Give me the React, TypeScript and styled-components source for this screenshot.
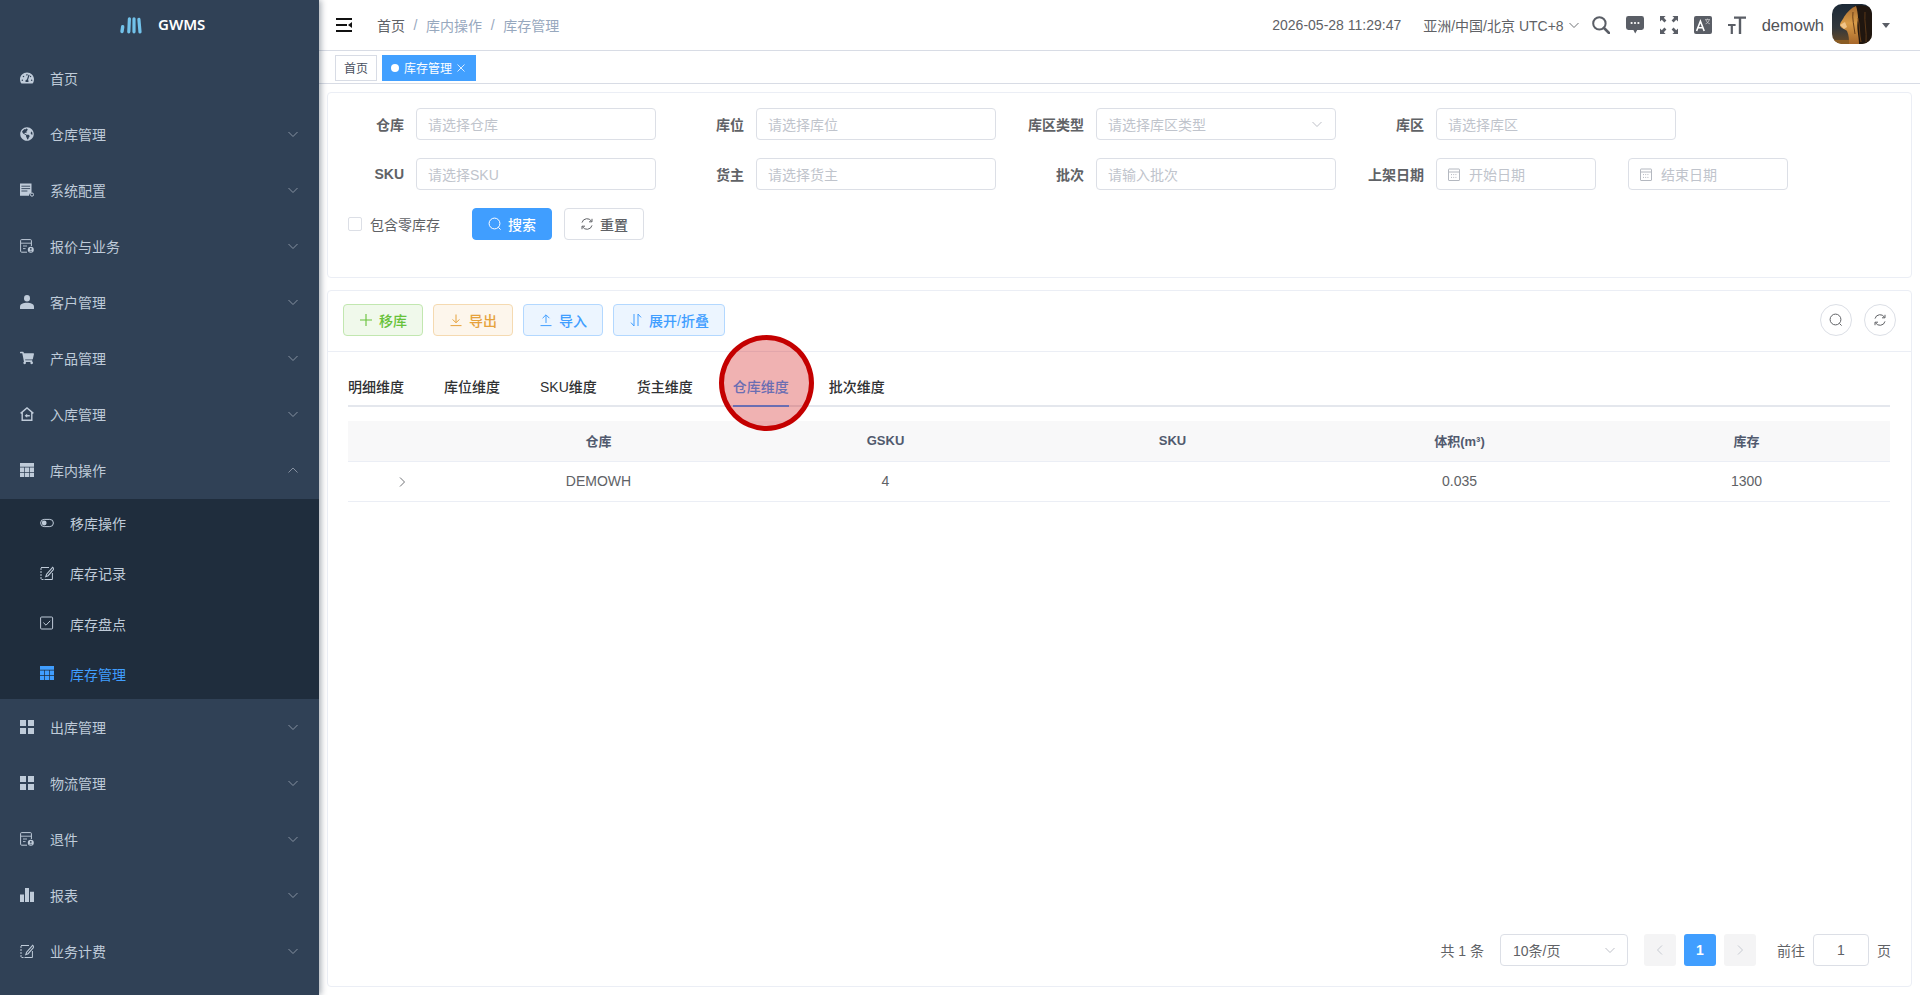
import React from 'react';
import styled, { createGlobalStyle } from 'styled-components';
import {
  FaTachometerAlt,
  FaGlobeAmericas,
  FaShoppingCart,
} from 'react-icons/fa';

const GlobalStyle = createGlobalStyle`
  html, body {
    margin: 0;
    padding: 0;
    background: #fff;
    font-family: "Liberation Sans", "Noto Sans CJK SC", sans-serif;
  }
  * {
    box-sizing: border-box;
  }
`;

const Page = styled.div`
  position: relative;
  display: flex;
  width: 1920px;
  height: 995px;
  overflow: hidden;
`;

/* sidebar */
const Sidebar = styled.aside`
  width: 319px;
  flex: none;
  background: #304156;
  box-shadow: 2px 0 6px rgba(0, 21, 41, 0.35);
  z-index: 2;
`;

const Logo = styled.div`
  height: 51px;
  display: flex;
  align-items: flex-start;
  padding: 17px 0 0 120px;
  gap: 16px;
`;

const LogoText = styled.span`
  font-family: "Noto Sans", "Liberation Sans", sans-serif;
  font-size: 15px;
  line-height: 15px;
  font-weight: 600;
  color: #fff;
`;

const MenuRow = styled.div`
  height: 56px;
  display: flex;
  align-items: center;
  padding: 0 20px 0 20px;
  color: #bfcbd9;
  font-size: 14px;
`;

const SubMenu = styled.div`
  height: 200px;
  margin-bottom: 1px;
  background: #1f2d3d;
`;

const SubRow = styled.div<{ $active?: boolean }>`
  height: 50.25px;
  display: flex;
  align-items: center;
  padding-left: 40px;
  font-size: 14px;
  color: ${(p) => (p.$active ? '#409eff' : '#bfcbd9')};
`;

const IconSlot = styled.span`
  width: 14px;
  height: 14px;
  flex: none;
  display: flex;
  align-items: center;
  justify-content: center;
  margin-right: 16px;
  margin-top: -3px;
  svg {
    display: block;
  }
`;

const MenuLabel = styled.span`
  flex: 1;
  line-height: 20px;
`;

const Chevron = styled.span`
  display: flex;
  margin-top: -2px;
  color: #909aa8;
`;

/* main column */
const Main = styled.main`
  flex: 1;
  min-width: 0;
  display: flex;
  flex-direction: column;
`;

const Header = styled.header`
  height: 51px;
  flex: none;
  display: flex;
  align-items: center;
  border-bottom: 1px solid #d8dce5;
  padding: 0 30px 0 17px;
`;

const Breadcrumb = styled.nav`
  display: flex;
  align-items: center;
  margin-left: 25px;
  font-size: 14px;
  color: #606266;
`;

const Crumb = styled.span<{ $muted?: boolean }>`
  color: ${(p) => (p.$muted ? '#97a8be' : '#606266')};
`;

const CrumbSep = styled.span`
  margin: 0 8.6px;
  color: #97a8be;
`;

const HeaderRight = styled.div`
  margin-left: auto;
  display: flex;
  align-items: center;
  font-size: 14px;
  color: #606266;
`;

const Clock = styled.span`
  margin-right: 22px;
`;

const Zone = styled.span`
  display: flex;
  align-items: center;
  gap: 4px;
  margin-right: 12px;
`;

const HeadIcon = styled.span`
  width: 18px;
  height: 18px;
  margin-right: 16px;
  display: flex;
  color: #5a5e66;
`;

const UserName = styled.span`
  font-size: 16.5px;
  color: #505257;
  margin-right: 8px;
`;

const Avatar = styled.span`
  width: 40px;
  height: 40px;
  display: block;
  margin: -2px 10px 0 0;
  border-radius: 10px;
  overflow: hidden;
  svg {
    display: block;
  }
`;

const Caret = styled.span`
  width: 0;
  height: 0;
  border-left: 4px solid transparent;
  border-right: 4px solid transparent;
  border-top: 5px solid #5a5e66;
`;

const TagBar = styled.div`
  height: 33px;
  flex: none;
  display: flex;
  align-items: flex-start;
  gap: 5px;
  padding: 4px 0 0 16px;
  border-bottom: 1px solid #d8dce5;
`;

const Tag = styled.span<{ $active?: boolean }>`
  height: 26px;
  display: flex;
  align-items: center;
  padding: 0 8px 1px;
  font-size: 12px;
  border: 1px solid ${(p) => (p.$active ? '#42a0ff' : '#d8dce5')};
  background: ${(p) => (p.$active ? '#42a0ff' : '#fff')};
  color: ${(p) => (p.$active ? '#fff' : '#495060')};
`;

const TagDot = styled.i`
  width: 8px;
  height: 8px;
  border-radius: 50%;
  background: #fff;
  margin-right: 5px;
`;

const TagClose = styled.span`
  width: 10px;
  display: flex;
  margin-left: 5px;
`;

const Content = styled.div`
  flex: 1;
  min-height: 0;
  display: flex;
  flex-direction: column;
  gap: 12px;
  padding: 8px 8px 8px;
`;

const Card = styled.section`
  border: 1px solid #ebeef5;
  border-radius: 4px;
  background: #fff;
`;

/* search form */
const FilterCard = styled(Card)`
  height: 186px;
  flex: none;
  padding: 15px 0 0 10px;
`;

const FormRow = styled.div`
  display: flex;
  margin-bottom: 18px;
`;

const Field = styled.div<{ $auto?: boolean }>`
  width: ${(p) => (p.$auto ? 'auto' : '340px')};
  flex: none;
  display: flex;
  align-items: center;
`;

const FieldLabel = styled.label`
  width: 78px;
  flex: none;
  padding-right: 12px;
  text-align: right;
  font-size: 14px;
  font-weight: 700;
  color: #606266;
  white-space: nowrap;
`;

const Input = styled.div<{ $w?: number }>`
  width: ${(p) => p.$w ?? 240}px;
  height: 32px;
  flex: none;
  display: flex;
  align-items: center;
  padding: 0 11px;
  border: 1px solid #dcdfe6;
  border-radius: 4px;
  font-size: 14px;
  color: #c0c4cc;
`;

const InputIcon = styled.span`
  display: flex;
  margin-right: 9px;
`;

const InputEnd = styled.span`
  display: flex;
  margin-left: auto;
  margin-right: 1px;
  color: #b4b8c0;
`;

const DateGap = styled.div`
  width: 32px;
  flex: none;
`;

const ActionRow = styled.div`
  display: flex;
  align-items: center;
  height: 32px;
  padding-left: 10px;
`;

const CheckBox = styled.span`
  width: 14px;
  height: 14px;
  border: 1px solid #dcdfe6;
  border-radius: 2px;
  margin-right: 8px;
`;

const CheckLabel = styled.span`
  font-size: 14px;
  color: #606266;
  margin-right: 32px;
`;

const Button = styled.button<{ $tone?: 'primary' | 'plain' | 'success' | 'warning' | 'info' }>`
  height: 32px;
  padding: 0 15px;
  display: inline-flex;
  align-items: center;
  justify-content: center;
  gap: 6px;
  border-radius: 4px;
  font: inherit;
  font-size: 14px;
  font-weight: 500;
  border: 1px solid
    ${(p) =>
      ({ primary: '#409eff', plain: '#dcdfe6', success: '#c2e7b0', warning: '#f5dab1', info: '#b3d8ff' }[p.$tone ?? 'plain'])};
  background: ${(p) =>
    ({ primary: '#409eff', plain: '#fff', success: '#f0f9eb', warning: '#fdf6ec', info: '#ecf5ff' }[p.$tone ?? 'plain'])};
  color: ${(p) =>
    ({ primary: '#fff', plain: '#606266', success: '#67c23a', warning: '#e6a23c', info: '#409eff' }[p.$tone ?? 'plain'])};
`;

const SearchButton = styled(Button)`
  width: 80px;
  margin-right: 12px;
`;

const ToolButton = styled(Button)<{ $w?: number }>`
  width: ${(p) => p.$w ?? 80}px;
  padding: 0;
`;

/* list card */
const ListCard = styled(Card)`
  flex: 1;
  min-height: 0;
  display: flex;
  flex-direction: column;
`;

const Toolbar = styled.div`
  flex: none;
  height: 61px;
  display: flex;
  align-items: flex-start;
  gap: 10px;
  padding: 13px 15px 0;
  border-bottom: 1px solid #ebeef5;
`;

const RoundButton = styled.span`
  width: 32px;
  height: 32px;
  display: flex;
  align-items: center;
  justify-content: center;
  border: 1px solid #dcdfe6;
  border-radius: 50%;
  color: #606266;
`;

const ToolbarEnd = styled.div`
  margin-left: auto;
  display: flex;
  gap: 12px;
`;

const ListBody = styled.div`
  flex: 1;
  min-height: 0;
  display: flex;
  flex-direction: column;
  padding: 15px 21px 20px 20px;
`;

const Tabs = styled.div`
  flex: none;
  height: 40px;
  display: flex;
  gap: 40px;
  border-bottom: 2px solid #e4e7ed;
`;

const TabItem = styled.span<{ $active?: boolean }>`
  height: 40px;
  line-height: 40px;
  font-size: 14px;
  font-weight: 500;
  color: ${(p) => (p.$active ? '#409eff' : '#303133')};
  border-bottom: 2px solid ${(p) => (p.$active ? '#409eff' : 'transparent')};
`;

const Table = styled.table`
  width: 100%;
  margin-top: 14px;
  border-collapse: collapse;
  table-layout: fixed;
`;

const Th = styled.th`
  height: 40px;
  padding: 0;
  background: #f8f8f9;
  border-bottom: 1px solid #ebeef5;
  font-size: 13px;
  font-weight: 700;
  color: #515a6e;
  text-align: center;
`;

const Td = styled.td`
  height: 40px;
  padding: 0;
  border-bottom: 1px solid #ebeef5;
  font-size: 14px;
  color: #606266;
  text-align: center;
`;

const Expand = styled.span`
  display: inline-flex;
  color: #606266;
  vertical-align: middle;
`;

const Pagination = styled.div`
  margin-top: auto;
  margin-right: -1px;
  display: flex;
  align-items: center;
  justify-content: flex-end;
  font-size: 14px;
  color: #606266;
`;

const Total = styled.span`
  margin-right: 16px;
`;

const PageSize = styled.div`
  width: 128px;
  height: 32px;
  display: flex;
  align-items: center;
  justify-content: space-between;
  padding: 0 11px 0 12px;
  border: 1px solid #dcdfe6;
  border-radius: 4px;
  margin-right: 16px;
  span:last-child {
    display: flex;
    color: #b4b8c0;
  }
`;

const PageBtn = styled.span<{ $active?: boolean }>`
  width: 32px;
  height: 32px;
  margin-right: 8px;
  display: flex;
  align-items: center;
  justify-content: center;
  border-radius: 3px;
  font-weight: 700;
  background: ${(p) => (p.$active ? '#409eff' : '#f4f4f5')};
  color: ${(p) => (p.$active ? '#fff' : '#c0c4cc')};
`;

const JumpLabel = styled.span`
  margin: 0 8px 0 13px;
`;

const JumpInput = styled.span`
  width: 56px;
  height: 32px;
  display: flex;
  align-items: center;
  justify-content: center;
  border: 1px solid #dcdfe6;
  border-radius: 4px;
  margin-right: 8px;
`;

const Highlight = styled.div`
  position: absolute;
  left: 719px;
  top: 335px;
  width: 95px;
  height: 96px;
  border: 5.5px solid #c40000;
  border-radius: 50%;
  background: rgba(204, 0, 0, 0.3);
  z-index: 3;
`;

/* drawings */
type IconProps = { size?: number };

const Svg = ({ size = 14, box = 14, children }: { size?: number; box?: number; children: React.ReactNode }) => (
  <svg width={size} height={size} viewBox={`0 0 ${box} ${box}`} fill="none" stroke="none">
    {children}
  </svg>
);

const ChevronDown = ({ size = 12 }: IconProps) => (
  <Svg size={size} box={12}>
    <path d="M1.5 4l4.5 4.5L10.5 4" stroke="currentColor" strokeWidth="0.9" />
  </Svg>
);
const ChevronUp = ({ size = 12 }: IconProps) => (
  <Svg size={size} box={12}>
    <path d="M1.5 8.5L6 4l4.5 4.5" stroke="currentColor" strokeWidth="0.9" />
  </Svg>
);
const ChevronRight = ({ size = 12 }: IconProps) => (
  <Svg size={size} box={12}>
    <path d="M4 1.5L8.5 6 4 10.5" stroke="currentColor" strokeWidth="0.9" />
  </Svg>
);
const ChevronLeft = ({ size = 12 }: IconProps) => (
  <Svg size={size} box={12}>
    <path d="M8 1.5L3.5 6 8 10.5" stroke="currentColor" strokeWidth="0.9" />
  </Svg>
);

const LogoMark = () => (
  <svg width="22" height="17" viewBox="0 0 22 17" fill="none">
    <g stroke="#72c2ea" strokeLinecap="round">
      <path d="M2.7 9.8L2 14.6" strokeWidth="3.4" />
      <path d="M9.4 1.8L8.8 14.8" strokeWidth="3.2" />
      <path d="M14 1.8L14 14.8" strokeWidth="3.2" />
      <path d="M18.9 2.3L20 15" strokeWidth="3.2" />
    </g>
  </svg>
);

const DocSetting = () => (
  <Svg>
    <path fill="currentColor" d="M0 0.5h11.5v9.2a3.2 3.2 0 0 0-2.6 3H0z" />
    <path stroke="#304156" strokeWidth="0.9" d="M1.4 3.2h8.7M1.4 5.6h8.7M1.4 8h6" />
    <circle cx="12" cy="11.6" r="1.6" stroke="currentColor" strokeWidth="1" />
  </Svg>
);

const DocPerson = () => (
  <Svg>
    <path stroke="currentColor" strokeWidth="1" d="M7 13.2H1.6a1 1 0 0 1-1-1V1.6a1 1 0 0 1 1-1h8.8a1 1 0 0 1 1 1V7" />
    <path stroke="currentColor" strokeWidth="0.9" d="M1 4.2h10M3 7h4M3 9.6h2.6" />
    <circle cx="10.8" cy="10.8" r="3" fill="currentColor" />
    <circle cx="10.8" cy="9.9" r="0.9" fill="#304156" />
    <path fill="#304156" d="M9.2 12.6c.3-1 2.9-1 3.2 0z" />
  </Svg>
);

const PersonIcon = () => (
  <Svg>
    <ellipse cx="7" cy="3.2" rx="3" ry="3.2" fill="currentColor" />
    <path fill="currentColor" d="M0 13.4v-1.8c0-2.6 3.4-3.8 7-3.8s7 1.2 7 3.8v1.8a.6.6 0 0 1-.6.6H.6a.6.6 0 0 1-.6-.6z" />
  </Svg>
);

const HomeIn = () => (
  <Svg>
    <path stroke="currentColor" strokeWidth="1.4" d="M.6 6.4L7 1l6.4 5.4M2.2 5.6v7.6h9.6V5.6" />
    <path fill="currentColor" d="M4.6 8.8l2.6-2v1.3h2.6v1.4H7.2v1.3z" />
  </Svg>
);

const TableIcon = () => (
  <Svg>
    <path fill="currentColor" d="M0 0h14v3.8H0zM0 4.6h4.2v4.3H0zM4.9 4.6h4.2v4.3H4.9zM9.8 4.6H14v4.3H9.8zM0 9.7h4.2V14H0zM4.9 9.7h4.2V14H4.9zM9.8 9.7H14V14H9.8z" />
  </Svg>
);

const GridIcon = () => (
  <Svg>
    <path fill="currentColor" d="M0 0h6v6H0zM8 0h6v6H8zM0 8h6v6H0zM8 8h6v6H8z" />
  </Svg>
);

const BarsIcon = () => (
  <Svg>
    <path fill="currentColor" d="M0 6.5h4V14H0zM5 0h4v14H5zM10 3.8h4V14h-4z" />
  </Svg>
);

const EditIcon = ({ size = 14 }: IconProps) => (
  <Svg size={size}>
    <path stroke="currentColor" strokeWidth="1" strokeDasharray="2 1" d="M1 2v11.5h4" />
    <path stroke="currentColor" strokeWidth="1" d="M1 1.5h8M5 13.5h7.4V7" />
    <path stroke="currentColor" strokeWidth="1.1" d="M12.6 1.4L6.6 8.2l-.8 2.4 2.3-.9 6-6.8z" />
  </Svg>
);

const ToggleIcon = () => (
  <Svg>
    <rect x="0.6" y="3.4" width="12.8" height="7.2" rx="3.6" stroke="currentColor" strokeWidth="1" />
    <circle cx="4.2" cy="7" r="2.4" fill="currentColor" />
  </Svg>
);

const CheckIcon = () => (
  <Svg>
    <rect x="0.6" y="1" width="12" height="12" rx="1" stroke="currentColor" strokeWidth="1" />
    <path d="M3.4 6.6l2.6 2.6 4.2-4.4" stroke="currentColor" strokeWidth="1" />
  </Svg>
);

const Hamburger = () => (
  <svg width="16" height="14" viewBox="0 0 16 14" fill="#111">
    <path d="M0 0h16v2H0zM0 6h11v2H0zM0 12h16v2H0z" />
    <path d="M16 4v6l-4-3z" />
  </svg>
);

const HeadSearch = () => (
  <svg width="18" height="18" viewBox="0 0 18 18" fill="none" stroke="currentColor">
    <circle cx="7.4" cy="7.4" r="6.2" strokeWidth="2" />
    <path d="M12 12l5 5" strokeWidth="2.6" strokeLinecap="round" />
  </svg>
);

const HeadChat = () => (
  <svg width="18" height="18" viewBox="0 0 18 18" fill="currentColor">
    <path d="M2.4 0h13.2A2.4 2.4 0 0 1 18 2.4v9.2a2.4 2.4 0 0 1-2.4 2.4h-4.4L9.2 17.6 7.4 14h-5A2.4 2.4 0 0 1 0 11.6V2.4A2.4 2.4 0 0 1 2.4 0z" />
    <g fill="#fff">
      <circle cx="5.6" cy="7" r="1.1" />
      <circle cx="9" cy="7" r="1.1" />
      <circle cx="12.4" cy="7" r="1.1" />
    </g>
  </svg>
);

const HeadFull = () => (
  <svg width="18" height="18" viewBox="0 0 18 18" fill="currentColor">
    <path d="M0 0h5.6L3.8 1.8l2.6 2.6-2 2-2.6-2.6L0 5.6zM18 0v5.6l-1.8-1.8-2.6 2.6-2-2 2.6-2.6L12.4 0zM0 18v-5.6l1.8 1.8 2.6-2.6 2 2-2.6 2.6L5.6 18zM18 18h-5.6l1.8-1.8-2.6-2.6 2-2 2.6 2.6 1.8-1.8z" />
  </svg>
);

const HeadLang = () => (
  <svg width="18" height="18" viewBox="0 0 18 18">
    <rect width="18" height="18" rx="2" fill="currentColor" />
    <path d="M2.6 15L6.4 5.2 10.2 15M4 11.8h4.8" fill="none" stroke="#fff" strokeWidth="1.6" />
    <path d="M11 3.6h5M13.4 2.6v1M12 3.8c.4 2 2 3.4 3.8 4M15.2 3.8c-.4 2-1.8 3.4-3.6 4" fill="none" stroke="#d5d6d9" strokeWidth="0.7" />
  </svg>
);

const HeadSize = () => (
  <svg width="18" height="18" viewBox="0 0 18 18" fill="currentColor">
    <path d="M6 0.5h12v2.2h-4.8V18h-2.4V2.7H6zM0 8h7.6v2H4.9v8H2.7v-8H0z" />
  </svg>
);

const LionAvatar = () => (
  <svg width="40" height="40" viewBox="0 0 40 40">
    <defs>
      <linearGradient id="sky" x1="0" y1="0" x2="0" y2="1">
        <stop offset="0" stopColor="#1c2a38" />
        <stop offset="0.6" stopColor="#33383c" />
        <stop offset="1" stopColor="#6a4a24" />
      </linearGradient>
      <linearGradient id="fur" x1="0" y1="0" x2="0" y2="1">
        <stop offset="0" stopColor="#a86c30" />
        <stop offset="0.45" stopColor="#d99c48" />
        <stop offset="1" stopColor="#a8682a" />
      </linearGradient>
    </defs>
    <rect width="40" height="40" fill="url(#sky)" />
    <path d="M22 2c7-2 14 0 18 2v36H18c6-10 1-26 4-38z" fill="#20160f" />
    <path d="M24 2c-5 2-9 6-12 11-1 3-4 5-4 8 0 3 5 4 7 6 2 4 2 9 2 13h10c0-8-3-16-1-25 0-5-1-10-2-13z" fill="url(#fur)" />
    <path d="M8 21l5-3 2 5-3 2z" fill="#f0c489" />
    <g stroke="#6b4018" strokeWidth="1" fill="none">
      <path d="M21 8c-1 6 1 14 2 22" />
      <path d="M26 14c2 8 1 16 3 24" />
      <path d="M33 8c-1 10 2 20 1 30" stroke="#5a3818" />
    </g>
    <path d="M0 36h17v4H0z" fill="#8a5c24" />
  </svg>
);

const SearchGlyph = ({ size = 14 }: IconProps) => (
  <svg width={size} height={size} viewBox="0 0 14 14" fill="none" stroke="currentColor" strokeWidth="1">
    <circle cx="6.5" cy="6.5" r="5.4" />
    <path d="M10.4 10.4l2.2 2.2" />
  </svg>
);

const RefreshGlyph = ({ size = 14 }: IconProps) => (
  <svg width={size} height={size} viewBox="0 0 14 14" fill="none" stroke="currentColor" strokeWidth="1">
    <path d="M2 5.6A5.2 5.2 0 0 1 11.6 4.4" />
    <path d="M12 8.4A5.2 5.2 0 0 1 2.4 9.6" />
    <path d="M12 1.8v3h-3M2 12.2v-3h3" />
  </svg>
);

const PlusGlyph = () => (
  <svg width="14" height="14" viewBox="0 0 14 14" stroke="currentColor" strokeWidth="1.1">
    <path d="M7 1v12M1 7h12" />
  </svg>
);

const DownloadGlyph = () => (
  <svg width="14" height="14" viewBox="0 0 14 14" fill="none" stroke="currentColor" strokeWidth="1">
    <path d="M7 1.5v8M3.6 6.4L7 9.8l3.4-3.4M1.5 12.6h11" />
  </svg>
);

const UploadGlyph = () => (
  <svg width="14" height="14" viewBox="0 0 14 14" fill="none" stroke="currentColor" strokeWidth="1">
    <path d="M7 10V2M3.6 5.2L7 1.8l3.4 3.4M1.5 12.6h11" />
  </svg>
);

const SortGlyph = () => (
  <svg width="14" height="14" viewBox="0 0 14 14" fill="none" stroke="currentColor" strokeWidth="1">
    <path d="M5 1v12L2 9.6M9 13V1l3 3.4" />
  </svg>
);

const CalendarGlyph = () => (
  <svg width="12" height="13" viewBox="0 0 12 13" fill="none" stroke="#b4b8c0" strokeWidth="1">
    <rect x="0.5" y="1" width="11" height="11.5" rx="0.5" />
    <path d="M0.5 4h11" />
    <path strokeDasharray="1 1.2" d="M3 6.6h6M3 9.4h6" />
  </svg>
);

const CloseGlyph = () => (
  <svg width="8" height="8" viewBox="0 0 8 8" stroke="#fff" strokeWidth="0.8">
    <path d="M0.5 0.5l7 7M7.5 0.5l-7 7" />
  </svg>
);

const menuTop = [
  { label: '首页', icon: <FaTachometerAlt size={14} /> },
  { label: '仓库管理', icon: <FaGlobeAmericas size={14} />, arrow: true },
  { label: '系统配置', icon: <DocSetting />, arrow: true },
  { label: '报价与业务', icon: <DocPerson />, arrow: true },
  { label: '客户管理', icon: <PersonIcon />, arrow: true },
  { label: '产品管理', icon: <FaShoppingCart size={14} />, arrow: true },
  { label: '入库管理', icon: <HomeIn />, arrow: true },
];

const subMenu = [
  { label: '移库操作', icon: <ToggleIcon /> },
  { label: '库存记录', icon: <EditIcon /> },
  { label: '库存盘点', icon: <CheckIcon /> },
  { label: '库存管理', icon: <TableIcon />, active: true },
];

const menuBottom = [
  { label: '出库管理', icon: <GridIcon /> },
  { label: '物流管理', icon: <GridIcon /> },
  { label: '退件', icon: <DocPerson /> },
  { label: '报表', icon: <BarsIcon /> },
  { label: '业务计费', icon: <EditIcon /> },
];

const tabs = ['明细维度', '库位维度', 'SKU维度', '货主维度', '仓库维度', '批次维度'];
const columns = ['仓库', 'GSKU', 'SKU', '体积(m³)', '库存'];
const row = ['DEMOWH', '4', '', '0.035', '1300'];

export default function App() {
  return (
    <Page>
      <GlobalStyle />
      <Sidebar>
        <Logo>
          <LogoMark />
          <LogoText>GWMS</LogoText>
        </Logo>
        {menuTop.map((item) => (
          <MenuRow key={item.label}>
            <IconSlot>{item.icon}</IconSlot>
            <MenuLabel>{item.label}</MenuLabel>
            {item.arrow && <Chevron><ChevronDown /></Chevron>}
          </MenuRow>
        ))}
        <MenuRow>
          <IconSlot><TableIcon /></IconSlot>
          <MenuLabel>库内操作</MenuLabel>
          <Chevron><ChevronUp /></Chevron>
        </MenuRow>
        <SubMenu>
          {subMenu.map((item) => (
            <SubRow key={item.label} $active={item.active}>
              <IconSlot>{item.icon}</IconSlot>
              <MenuLabel>{item.label}</MenuLabel>
            </SubRow>
          ))}
        </SubMenu>
        {menuBottom.map((item) => (
          <MenuRow key={item.label}>
            <IconSlot>{item.icon}</IconSlot>
            <MenuLabel>{item.label}</MenuLabel>
            <Chevron><ChevronDown /></Chevron>
          </MenuRow>
        ))}
      </Sidebar>

      <Main>
        <Header>
          <Hamburger />
          <Breadcrumb>
            <Crumb>首页</Crumb>
            <CrumbSep>/</CrumbSep>
            <Crumb $muted>库内操作</Crumb>
            <CrumbSep>/</CrumbSep>
            <Crumb $muted>库存管理</Crumb>
          </Breadcrumb>
          <HeaderRight>
            <Clock>2026-05-28 11:29:47</Clock>
            <Zone>亚洲/中国/北京 UTC+8 <ChevronDown /></Zone>
            <HeadIcon><HeadSearch /></HeadIcon>
            <HeadIcon><HeadChat /></HeadIcon>
            <HeadIcon><HeadFull /></HeadIcon>
            <HeadIcon><HeadLang /></HeadIcon>
            <HeadIcon><HeadSize /></HeadIcon>
            <UserName>demowh</UserName>
            <Avatar><LionAvatar /></Avatar>
            <Caret />
          </HeaderRight>
        </Header>

        <TagBar>
          <Tag>首页</Tag>
          <Tag $active>
            <TagDot />
            库存管理
            <TagClose><CloseGlyph /></TagClose>
          </Tag>
        </TagBar>

        <Content>
          <FilterCard>
            <FormRow>
              <Field><FieldLabel>仓库</FieldLabel><Input>请选择仓库</Input></Field>
              <Field><FieldLabel>库位</FieldLabel><Input>请选择库位</Input></Field>
              <Field>
                <FieldLabel>库区类型</FieldLabel>
                <Input>请选择库区类型<InputEnd><ChevronDown /></InputEnd></Input>
              </Field>
              <Field><FieldLabel>库区</FieldLabel><Input>请选择库区</Input></Field>
            </FormRow>
            <FormRow>
              <Field><FieldLabel>SKU</FieldLabel><Input>请选择SKU</Input></Field>
              <Field><FieldLabel>货主</FieldLabel><Input>请选择货主</Input></Field>
              <Field><FieldLabel>批次</FieldLabel><Input>请输入批次</Input></Field>
              <Field $auto>
                <FieldLabel>上架日期</FieldLabel>
                <Input $w={160}><InputIcon><CalendarGlyph /></InputIcon>开始日期</Input>
                <DateGap />
                <Input $w={160}><InputIcon><CalendarGlyph /></InputIcon>结束日期</Input>
              </Field>
            </FormRow>
            <ActionRow>
              <CheckBox />
              <CheckLabel>包含零库存</CheckLabel>
              <SearchButton $tone="primary"><SearchGlyph />搜索</SearchButton>
              <ToolButton $tone="plain"><RefreshGlyph />重置</ToolButton>
            </ActionRow>
          </FilterCard>

          <ListCard>
            <Toolbar>
              <ToolButton $tone="success"><PlusGlyph />移库</ToolButton>
              <ToolButton $tone="warning"><DownloadGlyph />导出</ToolButton>
              <ToolButton $tone="info"><UploadGlyph />导入</ToolButton>
              <ToolButton $tone="info" $w={112}><SortGlyph />展开/折叠</ToolButton>
              <ToolbarEnd>
                <RoundButton><SearchGlyph /></RoundButton>
                <RoundButton><RefreshGlyph /></RoundButton>
              </ToolbarEnd>
            </Toolbar>
            <ListBody>
              <Tabs>
                {tabs.map((t) => (
                  <TabItem key={t} $active={t === '仓库维度'}>{t}</TabItem>
                ))}
              </Tabs>
              <Table>
                <colgroup>
                  <col style={{ width: 107 }} />
                  {columns.map((c) => <col key={c} />)}
                </colgroup>
                <thead>
                  <tr>
                    <Th />
                    {columns.map((c) => <Th key={c}>{c}</Th>)}
                  </tr>
                </thead>
                <tbody>
                  <tr>
                    <Td><Expand><ChevronRight /></Expand></Td>
                    {row.map((v, i) => <Td key={i}>{v}</Td>)}
                  </tr>
                </tbody>
              </Table>
              <Pagination>
                <Total>共 1 条</Total>
                <PageSize><span>10条/页</span><span><ChevronDown /></span></PageSize>
                <PageBtn><ChevronLeft /></PageBtn>
                <PageBtn $active>1</PageBtn>
                <PageBtn><ChevronRight /></PageBtn>
                <JumpLabel>前往</JumpLabel>
                <JumpInput>1</JumpInput>
                <span>页</span>
              </Pagination>
            </ListBody>
          </ListCard>
        </Content>
      </Main>
      <Highlight />
    </Page>
  );
}
